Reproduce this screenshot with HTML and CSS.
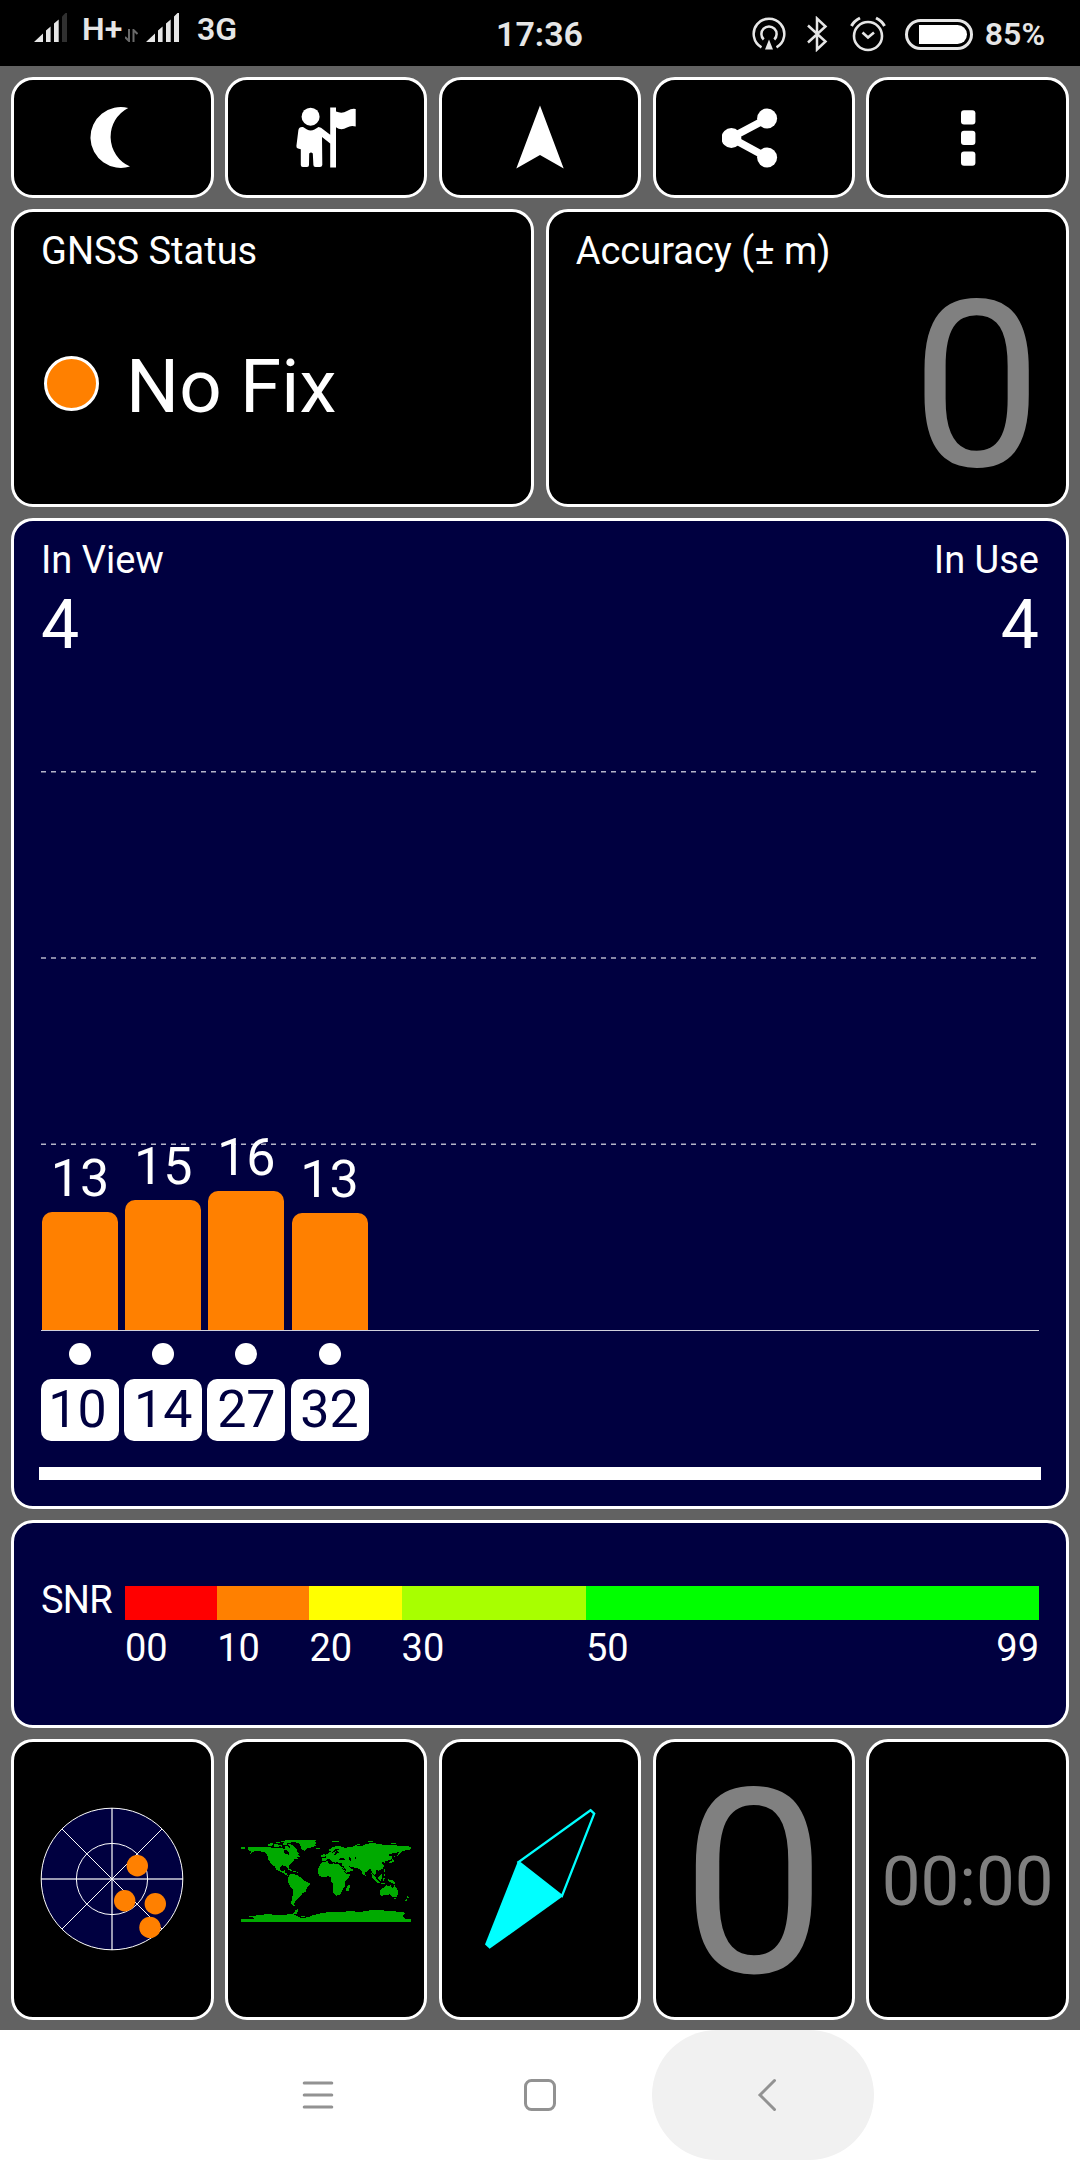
FILE: index.html
```html
<!DOCTYPE html>
<html lang="en">
<head>
  <meta charset="UTF-8">
  <title>GNSS Status</title>
  <link rel="stylesheet" href="styles.css">
</head>
<body>
  <!-- Status bar -->
  <header class="statusbar">
    <div class="network">
      <svg class="signal" width="34" height="30" viewBox="0 0 34 30">
        <path d="M0 29 L9 20.5 V29Z M12 17.5 L16.6 13.5 V29 H12Z M20 10.5 L24.7 6.5 V29 H20Z"/>
        <path class="weak" d="M28 3.5 L31.5 0 H33 V29 H28Z"/>
      </svg>
      <span class="net-name">H+</span>
      <svg class="traffic" width="13" height="13" viewBox="0 0 13 13">
        <path d="M4 0 V12 L0 8 M8.5 13 V1 L12.5 5"/>
      </svg>
      <svg class="signal" width="34" height="30" viewBox="0 0 34 30">
        <path d="M0 29 L9 20.5 V29Z M12 17.5 L16.6 13.5 V29 H12Z M20 10.5 L24.7 6.5 V29 H20Z M28 3.5 L31.5 0 H33 V29 H28Z"/>
      </svg>
      <span class="net-name second">3G</span>
    </div>
    <div class="clock">17:36</div>
    <div class="system">
      <svg width="34" height="34" viewBox="0 0 34 34">
        <g fill="none" stroke="#e6e6e6" stroke-width="2.5">
          <path d="M9.5 30.3 A15.3 15.3 0 1 1 24.5 30.3"/>
          <path d="M11.7 22.5 A7.6 7.6 0 1 1 22.3 22.5"/>
        </g>
        <path d="M17 22.5 L21 32.5 H13Z" fill="#e6e6e6"/>
      </svg>
      <svg class="bluetooth" width="22" height="36" viewBox="0 0 22 36">
        <path d="M2 9.5 L19.5 25.5 L11 33.5 V2.5 L19.5 10.5 L2 26.5" fill="none" stroke="#e6e6e6" stroke-width="2.5"/>
      </svg>
      <svg class="alarm" width="36" height="36" viewBox="0 0 36 36">
        <g fill="none" stroke="#e6e6e6" stroke-width="2.6">
          <circle cx="18" cy="20" r="14"/>
          <path d="M12.5 16.5 L18 21.5 L24 16.5"/>
          <path d="M1.5 10 Q4 5 10 2" stroke-width="3"/>
          <path d="M34.5 10 Q32 5 26 2" stroke-width="3"/>
        </g>
      </svg>
      <div class="battery"><div class="battery-level"></div></div>
      <span class="percent">85%</span>
    </div>
  </header>

  <main class="app">
    <nav class="row five toolbar">
      <button class="card" type="button" aria-label="Night mode">
        <svg width="64" height="64" viewBox="0 0 64 64">
          <path d="M48.2 3 A30.4 30.4 0 1 0 50 61.5 A32.4 32.4 0 0 1 48.2 3Z"/>
        </svg>
      </button>
      <button class="card" type="button" aria-label="Waypoint">
        <svg width="64" height="64" viewBox="0 0 64 64">
          <circle cx="16.6" cy="11.7" r="9"/>
          <path d="M36.2 2.5 H42 V6.5 Q48 9 53 6 Q58 3 61.7 4 V21.5 Q57 20 53 22.5 Q47 26 42 22.2 V62.5 H36.2 V38.5 L28 32 L28.3 60 Q28 62 26 62 H21.5 Q19.4 62 19.4 60 L18.8 48.5 Q17 46.5 15.2 48.5 L15 60 Q15 62 13 62 H8.8 Q6.8 62 6.8 60 V44.3 L4 43.5 Q2.3 43 2.4 41 L4.4 25 Q5 21.5 9 22 L13 24.6 Q16.6 26.4 20.5 24.6 L24.5 22 L27 22.8 L36.2 29.8Z"/>
        </svg>
      </button>
      <button class="card" type="button" aria-label="Navigate">
        <svg width="64" height="64" viewBox="0 0 64 64">
          <path d="M32 0.5 L55.7 63.5 L32 50 L8.3 63.5Z"/>
        </svg>
      </button>
      <button class="card" type="button" aria-label="Share">
        <svg width="64" height="64" viewBox="0 0 64 64">
          <path d="M45.1 13.5 L9 32.8 L45.1 52.5" fill="none" stroke="#fff" stroke-width="7.5"/>
          <circle cx="45.1" cy="13.5" r="10"/>
          <circle cx="9.4" cy="33" r="10"/>
          <circle cx="45.1" cy="52.5" r="10"/>
        </svg>
      </button>
      <button class="card" type="button" aria-label="More">
        <svg width="64" height="64" viewBox="0 0 64 64">
          <rect x="25" y="5.2" width="14.4" height="14.3" rx="3"/>
          <rect x="25" y="25.8" width="14.4" height="14.3" rx="3"/>
          <rect x="25" y="46.4" width="14.4" height="14.3" rx="3"/>
        </svg>
      </button>
    </nav>

    <section class="row two">
      <div class="card padded">
        <div class="label">GNSS Status</div>
        <div class="fix"><span class="fix-dot"></span>No Fix</div>
      </div>
      <div class="card padded">
        <div class="label">Accuracy (± m)</div>
        <div class="accuracy">0</div>
      </div>
    </section>

    <section class="card padded navy satellites">
      <div class="counts">
        <div>
          <div class="label">In View</div>
          <div class="count">4</div>
        </div>
        <div class="right">
          <div class="label">In Use</div>
          <div class="count">4</div>
        </div>
      </div>
      <div class="chart">
        <svg class="gridlines" width="998" height="376" viewBox="0 0 998 376">
          <path d="M0 1.8 H996 M0 188 H996 M0 374.2 H996"/>
        </svg>
        <div class="sat"><span class="snr">13</span><div class="bar" style="height:118px"></div></div>
        <div class="sat"><span class="snr">15</span><div class="bar" style="height:130px"></div></div>
        <div class="sat"><span class="snr">16</span><div class="bar" style="height:139px"></div></div>
        <div class="sat"><span class="snr">13</span><div class="bar" style="height:117px"></div></div>
      </div>
      <div class="ids">
        <div class="sat"><span class="used"></span><span class="id first">10</span></div>
        <div class="sat"><span class="used"></span><span class="id">14</span></div>
        <div class="sat"><span class="used"></span><span class="id">27</span></div>
        <div class="sat"><span class="used"></span><span class="id">32</span></div>
      </div>
      <div class="divider"></div>
    </section>

    <section class="card padded navy legend">
      <div class="label legend-name">SNR</div>
      <div class="scale">
        <div class="swatch red"></div>
        <div class="swatch orange"></div>
        <div class="swatch yellow"></div>
        <div class="swatch lime"></div>
        <div class="swatch green"></div>
        <span class="tick">00</span>
        <span class="tick">10</span>
        <span class="tick">20</span>
        <span class="tick">30</span>
        <span class="tick last"><span>50</span><span>99</span></span>
      </div>
    </section>

    <section class="row five tiles">
      <div class="card">
        <!-- Sky view -->
        <svg width="144" height="144" viewBox="-72 -72 144 144">
          <circle r="70.8" fill="#000040"/>
          <g fill="none" stroke="#fff">
            <circle r="70.8"/>
            <circle r="35.6"/>
            <path d="M-50 -50 L50 50 M-50 50 L50 -50"/>
            <path d="M-71 0 H71 M0 -71 V71" stroke-width="2" stroke-opacity=".6"/>
          </g>
          <g fill="#ff8000">
            <circle cx="25.3" cy="-13.3" r="10.7"/>
            <circle cx="12.7" cy="21.7" r="10.7"/>
            <circle cx="43.3" cy="24.7" r="10.7"/>
            <circle cx="38" cy="48.4" r="10.7"/>
          </g>
        </svg>
      </div>
      <div class="card">
        <!-- World map -->
        <svg class="world" width="170" height="82" viewBox="15 18 510 246" shape-rendering="crispEdges">
          <!-- North America -->
          <path d="M36 38 H60 L100 40 L136 43 L146 44 V38 L154 34 L160 44 L168 36 L176 38 L182 46 V54 L190 58 L186 62 L194 67 L182 69 L185 74 L175 76 L172 82 L164 88 L158 96 L160 107 L156 108 L153 98 L140 94 L133 98 V108 L137 111 L143 110 L148 106 V113 L145 115 L152 118 V123 L160 126 L156 128 L147 121 L138 116 L122 108 L115 96 L108 92 L97 78 L95 66 L88 56 L74 52 L58 50 L44 59 L40 58 L48 53 L40 52 L36 46Z"/>
          <path d="M15 40 H26 V45 H15Z M96 31 L104 27 L112 28 L110 33 L104 37 H97Z M114 31 H126 L132 35 L128 39 H114Z M120 24 H130 L134 28 H122Z M133 32 H139 V39 H134Z M142 27 H152 V32 H142Z M154 29 L164 31 L172 35 L166 39 L158 35Z M134 21 H154 V25 H134Z M146 19 H186 L175 23 L160 27 H144Z M156 104 L165 106 L170 111 H164 L156 107Z M170 110 H179 V114 H170Z M182 113 H186 V117 H182Z"/>
          <!-- Hudson bay -->
          <path d="M142 50 L150 48 L157 52 L160 59 L158 62 L152 60 L145 57Z" fill="#000"/>
          <!-- Greenland, Iceland -->
          <path d="M168 19 L205 18 H242 L236 23 L243 27 L236 30 L239 35 L228 40 L214 43 L206 50 L198 47 L194 38 L190 28 L178 25Z M238 42 H252 V45 H240Z M286 22 H308 V25 H292Z"/>
          <!-- South America -->
          <path d="M158 124 L164 119 L174 121 L186 124 L193 130 L201 135 L206 141 L221 147 V153 L213 161 L210 172 L199 178 L194 187 L186 193 L182 198 L176 204 L174 211 L177 216 L169 214 L165 208 L168 194 L171 178 V166 L162 157 L156 142Z"/>
          <!-- Africa -->
          <path d="M254 88 L264 83 L276 82 L278 88 L289 92 L292 88 L309 91 L315 96 L323 110 L331 119 L343 120 L340 129 L327 142 V158 L321 164 L318 173 L311 183 L299 185 L293 179 L290 167 V149 L284 141 L285 131 L277 127 L257 130 L248 123 L246 116 V104Z M340 151 L343 157 L338 170 L333 173 L330 167 L333 158Z"/>
          <!-- Europe and Asia -->
          <path d="M258 80 V72 L271 73 V66 L266 64 L276 58 L282 54 L290 56 L302 50 L310 47 L300 44 L293 50 L290 54 L282 52 L278 47 L292 39 L304 36 L318 38 L326 42 L320 45 L328 41 L346 39 L354 36 L378 36 L386 32 L406 26 L424 29 L446 33 L474 34 L504 36 L525 38 V46 L510 49 L500 51 L494 58 L488 62 L486 70 L484 63 L489 54 L480 56 L472 58 L462 60 L458 64 L470 68 L466 76 L456 80 L448 82 L445 88 L441 83 L437 87 L444 94 L440 104 L427 110 L419 107 L421 116 L417 124 L408 114 L404 104 L397 108 L388 116 L386 124 L381 123 L376 108 L366 103 L350 100 L340 97 L345 104 L353 104 L350 110 L330 117 L322 104 L316 96 L320 87 L306 87 L302 82 L299 86 L293 82 L286 75 L294 84 L289 84 L282 76 L274 76 L268 82Z"/>
          <path d="M260 59 H264 L269 66 L266 70 H259Z M254 64 H258 V68 H254Z M356 34 L372 28 L376 30 L360 36Z M396 22 H410 V25 H400Z M464 28 H480 V31 H464Z M470 72 L474 82 L464 87 H457 L460 83 L468 80Z M474 62 L477 71 L473 69Z M443 106 H446 V115 H443Z M388 122 H391 V126 H388Z"/>
          <!-- Seas -->
          <path d="M340 70 L346 74 L344 82 L340 78Z M308 75 L318 71 L328 76 L320 79 H308Z M356 70 H360 V74 H356Z M302 51 L310 55 L304 57 L300 62 L294 63 L298 56Z M318 96 L324 98 L332 112 H328Z" fill="#000"/>
          <!-- Indonesia, Australia, New Zealand -->
          <path d="M406 118 L411 120 L424 138 L430 144 L420 144 L409 130Z M426 130 L437 121 L439 128 L434 140 L427 136Z M441 131 H447 L443 140 H440Z M444 117 L449 123 L446 129Z M456 136 L468 138 L482 148 L472 149 L458 142Z M424 144 L448 148 V151 L425 147Z"/>
          <path d="M432 168 L444 160 L452 154 L460 156 L465 152 V158 L471 162 L475 152 L482 164 L487 171 V180 L480 190 L468 188 L461 181 L448 183 L434 186 L431 176Z M474 192 H480 V196 H475Z M513 187 L521 189 L515 195Z M508 198 L514 195 L511 201 H508Z"/>
          <!-- Antarctica -->
          <path d="M15 255 H54 L48 248 L63 244 L96 240 L120 243 L150 242 L168 240 L178 234 V228 L186 225 L184 238 L174 242 L183 247 L198 252 L216 250 L228 244 L245 240 L272 235 L320 234 L345 230 L360 233 L378 233 L390 230 L430 228 L460 231 L500 234 L507 238 L500 246 L510 255 H525 V264 H15Z M39 246 H50 V249 H39Z M196 245 H206 V248 H196Z"/>
        </svg>
      </div>
      <div class="card">
        <!-- Compass needle -->
        <svg width="116" height="144" viewBox="0 0 116 144">
          <path d="M108.5 3.2 L112.2 6.6 L80 89 L36.6 55 Z" fill="none" stroke="#0ff" stroke-width="2.3"/>
          <path d="M36 54 L81 89.3 L7.6 141.8 L3 137.5Z" fill="#0ff"/>
        </svg>
      </div>
      <div class="card"><span class="speed">0</span></div>
      <div class="card"><span class="timer">00:00</span></div>
    </section>
  </main>

  <!-- Android navigation -->
  <footer class="navbar">
    <svg class="nav-menu" width="32" height="32" viewBox="0 0 32 32">
      <path d="M2.2 4 H29.8 M2.2 16 H29.8 M2.2 28 H29.8"/>
    </svg>
    <svg class="nav-home" width="34" height="34" viewBox="0 0 34 34">
      <rect x="2.5" y="2.5" width="29" height="29" rx="6"/>
    </svg>
    <div class="nav-back">
      <svg width="20" height="34" viewBox="0 0 20 34">
        <path d="M17.5 2.5 L3 17 L17.5 31.5"/>
      </svg>
    </div>
  </footer>
</body>
</html>
```
FILE: styles.css
```css
* {
  box-sizing: border-box;
}
body {
  margin: 0;
  width: 1080px;
  height: 2160px;
  overflow: hidden;
  background: #626262;
  color: #fff;
  font-family: Roboto, "Liberation Sans", sans-serif;
}
svg {
  display: block;
  flex: none;
}

/* status bar */
.statusbar {
  display: grid;
  grid-template-columns: 1fr auto 1fr;
  height: 66px;
  padding: 0 35px 0 34px;
  background: #000;
  color: #e6e6e6;
  font-weight: 600;
}
.network {
  display: flex;
  align-items: flex-start;
  padding-top: 13px;
}
.signal {
  fill: #e6e6e6;
}
.signal .weak {
  fill: #303030;
}
.net-name {
  width: 41px;
  margin-left: 14px;
  font-size: 32px;
  line-height: 32px;
}
.net-name.second {
  margin-left: 17px;
}
.traffic {
  margin: 16px 8px 0 2px;
  fill: none;
  stroke: #6a6a6a;
  stroke-width: 2;
}
.clock {
  font-size: 34px;
  line-height: 68px;
}
.system {
  display: flex;
  align-items: center;
  justify-content: flex-end;
}
.bluetooth {
  margin-left: 20px;
}
.alarm {
  margin-left: 22px;
}
.battery {
  width: 68px;
  height: 31px;
  margin-left: 19px;
  padding: 3px 3px 3px 11px;
  border: 3px solid #e6e6e6;
  border-radius: 16px;
}
.battery-level {
  height: 19px;
  background: #fff;
  border-radius: 0 10px 10px 0;
}
.percent {
  margin-left: 12px;
  font-size: 32px;
  line-height: 66px;
}

/* app */
.app {
  display: grid;
  grid-template-rows: 120.5px 298.5px 991px 208px 280.5px;
  gap: 11px;
  height: 1964px;
  padding: 11px;
}
.row {
  display: grid;
  gap: 11.3px;
}
.row.five {
  grid-template-columns: repeat(5, 1fr);
}
.row.two {
  grid-template-columns: repeat(2, 1fr);
}
.card {
  background: #000;
  border: 3px solid #fff;
  border-radius: 22px;
}
.card.padded {
  padding: 17px 27px 0;
}
.card.navy {
  background: #000040;
}
.toolbar .card,
.tiles .card {
  display: flex;
  align-items: center;
  justify-content: center;
  padding: 0;
}
.toolbar svg {
  fill: #fff;
}
.label {
  font-size: 38px;
  line-height: 44px;
  white-space: nowrap;
}
.fix {
  display: flex;
  align-items: center;
  gap: 27px;
  margin-top: 74px;
  font-size: 74.5px;
  line-height: 80px;
}
.fix-dot {
  width: 55px;
  height: 55px;
  margin: 0 0 6px 3px;
  background: #ff8000;
  border: 3px solid #fff;
  border-radius: 50%;
}
.accuracy {
  margin: -1px -3px 0 0;
  color: #808080;
  font-size: 232px;
  line-height: 230px;
  text-align: right;
}

/* satellites */
.counts {
  display: flex;
  justify-content: space-between;
}
.count {
  margin-top: 5px;
  font-size: 68px;
  line-height: 76px;
}
.right {
  text-align: right;
}
.chart {
  position: relative;
  display: flex;
  align-items: flex-end;
  gap: 5.2px;
  height: 561px;
  margin-top: 107px;
  border-bottom: 1px solid #d0d0dc;
}
.gridlines {
  position: absolute;
  top: 0;
  left: 0;
  stroke: #b4b4c8;
  stroke-width: 1.5;
  stroke-dasharray: 5 5;
}
.sat {
  position: relative;
  display: flex;
  flex-direction: column;
  align-items: center;
  width: 78px;
}
.snr {
  margin-bottom: 3px;
  font-size: 52px;
  line-height: 60px;
}
.bar {
  width: 76px;
  background: #ff8000;
  border-radius: 10px 10px 0 0;
}
.ids {
  display: flex;
  gap: 5.2px;
  margin-top: 12px;
}
.used {
  width: 22px;
  height: 22px;
  background: #fff;
  border-radius: 50%;
}
.id {
  width: 78px;
  height: 62px;
  margin-top: 14px;
  background: #fff;
  border-radius: 10px;
  color: #000040;
  font-size: 52px;
  line-height: 61px;
  text-align: center;
}
.id.first {
  padding-right: 5px;
}
.divider {
  height: 13px;
  margin: 26px -2px 0;
  background: #fff;
}

/* snr legend */
.legend {
  display: flex;
}
.card.legend {
  padding-top: 63px;
}
.legend-name {
  width: 84px;
  margin-top: -8px;
  letter-spacing: -0.7px;
}
.scale {
  flex: 1;
  display: grid;
  grid-template-columns: 92.2px 92.2px 92.2px 184.4px 1fr;
  align-content: start;
}
.swatch {
  height: 34px;
}
.red { background: #f00; }
.orange { background: #ff8000; }
.yellow { background: #ff0; }
.lime { background: #a8ff00; }
.green { background: #0f0; }
.tick {
  margin-top: 6px;
  font-size: 38px;
  line-height: 44px;
}
.tick.last {
  display: flex;
  justify-content: space-between;
}

/* bottom tiles */
.world {
  margin-top: 3px;
  fill: #00aa00;
}
.speed {
  padding-top: 9px;
  color: #808080;
  font-size: 258px;
  line-height: 258px;
}
.timer {
  padding-top: 5px;
  color: #808080;
  font-size: 69px;
  line-height: 80px;
}

/* navigation bar */
.navbar {
  display: flex;
  align-items: center;
  height: 130px;
  padding-left: 302px;
  background: #fff;
}
.navbar svg {
  fill: none;
  stroke: #929292;
  stroke-width: 3;
  stroke-linecap: round;
}
.nav-home {
  margin-left: 189px;
}
.nav-back {
  display: flex;
  align-items: center;
  width: 222px;
  height: 130px;
  margin-left: 95px;
  padding-left: 105px;
  background: #f1f1f1;
  border-radius: 65px;
}
```
